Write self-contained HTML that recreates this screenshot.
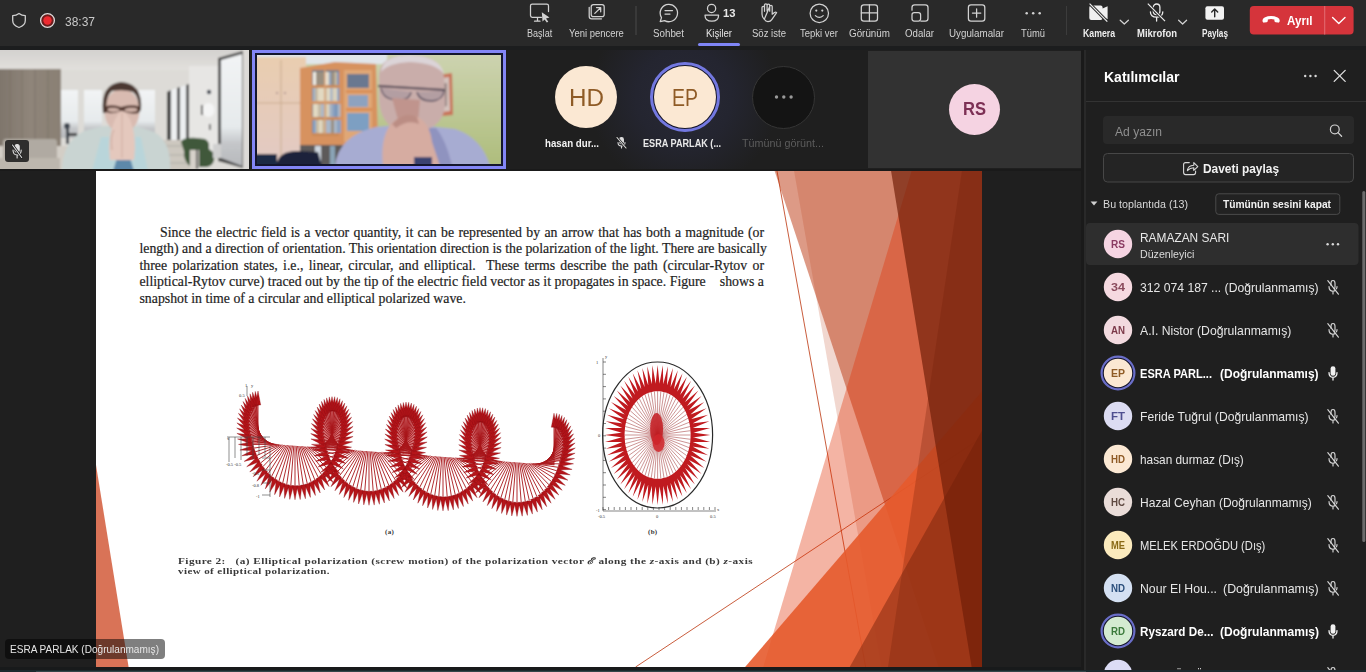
<!DOCTYPE html><html><head><meta charset="utf-8"><style>
*{margin:0;padding:0;box-sizing:border-box}
html,body{width:1366px;height:672px;overflow:hidden;background:#1f1f1f;font-family:"Liberation Sans",sans-serif}
.a{position:absolute}
.tl{position:absolute;font-family:"Liberation Serif",serif;font-size:13.8px;color:#1e1e1e;-webkit-text-stroke:0.2px #1e1e1e;white-space:nowrap;line-height:16px;text-align:justify;text-align-last:justify}
.cap{position:absolute;font-family:"Liberation Serif",serif;font-size:9.6px;font-weight:bold;color:#333;white-space:nowrap;line-height:11px;text-align:justify;text-align-last:justify;letter-spacing:1.0px}
</style></head><body>
<div class="a" style="left:0;top:0;width:1366px;height:46px;background:#292929"></div>
<div class="a" style="left:0;top:46px;width:1366px;height:4px;background:#1c1d1e"></div>
<svg style="position:absolute;left:11px;top:12px" width="16" height="17" viewBox="0 0 16 17"><path d="M8 1.5C10 3 12 3.6 14.3 3.6V8.5C14.3 12 11.8 14.2 8 15.5C4.2 14.2 1.7 12 1.7 8.5V3.6C4 3.6 6 3 8 1.5Z" fill="none" stroke="#cfcfcf" stroke-width="1.3" stroke-linejoin="round"/></svg>
<svg style="position:absolute;left:39px;top:12px" width="17" height="17" viewBox="0 0 17 17"><circle cx="8.5" cy="8.5" r="6.9" fill="#6e1d1d" stroke="#dedede" stroke-width="1.3"/><circle cx="8.5" cy="8.5" r="4.2" fill="#ee2a30"/></svg>
<div style="position:absolute;left:65.0px;top:15.2px;font-family:'Liberation Sans',sans-serif;font-size:13px;line-height:1;font-weight:normal;color:#c9c9c9;white-space:nowrap;transform:scaleX(0.9217);transform-origin:0 0;">38:37</div>
<svg style="position:absolute;left:0;top:0" width="1366" height="47" viewBox="0 0 1366 47"><g fill="none" stroke="#d2d2d2" stroke-width="1.25" stroke-linejoin="round" stroke-linecap="round"><path d="M541.5 17.3H532.2Q530.5 17.3 530.5 15.6V5.8Q530.5 4.2 532.2 4.2H546.8Q548.5 4.2 548.5 5.8V11.5"/><path d="M537.5 17.5V21M534.5 21.2H540"/></g><path d="M541.8 12.2L549.5 17.6L546 18.6L548.3 21.8L546.8 22.6L544.6 19.4L542.5 21.6Z" fill="#d2d2d2"/><g fill="none" stroke="#d2d2d2" stroke-width="1.25" stroke-linejoin="round" stroke-linecap="round"><rect x="591.2" y="4.6" width="13" height="12" rx="2.2"/><path d="M589.2 7.3V16.2Q589.2 18.8 591.8 18.8H601.5"/><path d="M594.8 13.4L600.6 7.7M596.5 7.6H600.7V11.8"/></g><rect x="635.5" y="6" width="1" height="29" fill="#4a4a4a"/><g fill="none" stroke="#d2d2d2" stroke-width="1.25" stroke-linejoin="round" stroke-linecap="round"><path d="M668.6 4.3A8.7 8.7 0 1 1 664.6 20.6L660.2 21.7L661.5 17.6A8.7 8.7 0 0 1 668.6 4.3Z"/><path d="M665 10.6H672.5M665 14.1H670"/></g><g fill="none" stroke="#d2d2d2" stroke-width="1.25" stroke-linejoin="round" stroke-linecap="round"><circle cx="711.6" cy="8.4" r="4.1"/><path d="M705 15.2H718.6Q718.6 21.2 711.8 21.2Q705 21.2 705 15.2Z"/></g><g fill="none" stroke="#d2d2d2" stroke-width="1.25" stroke-linejoin="round" stroke-linecap="round"><path d="M764.3 19.2Q761.8 16.8 762 13.5V7.6Q762 6.3 763.3 6.3Q764.5 6.3 764.5 7.6V11.3M764.5 11.3V5.1Q764.5 3.8 765.8 3.8Q767.1 3.8 767.1 5.1V11M767.1 5.4Q767.1 4.2 768.4 4.2Q769.7 4.2 769.7 5.4V11.2M769.7 6.6Q769.7 5.4 771 5.4Q772.2 5.4 772.2 6.6V14.2L774.5 12.4Q775.7 11.6 776.6 12.6L771.8 19.6Q770.6 21.5 767.9 21.5Q765.7 21.5 764.3 19.2Z"/></g><g fill="none" stroke="#d2d2d2" stroke-width="1.25" stroke-linejoin="round" stroke-linecap="round"><circle cx="819.3" cy="13.3" r="9.2"/><path d="M815.4 15.6Q819.3 19.3 823.2 15.6"/></g><circle cx="816.3" cy="10.6" r="1.1" fill="#d2d2d2"/><circle cx="822.3" cy="10.6" r="1.1" fill="#d2d2d2"/><g fill="none" stroke="#d2d2d2" stroke-width="1.25" stroke-linejoin="round" stroke-linecap="round"><rect x="861.3" y="4.8" width="16.2" height="16.2" rx="2.6"/><path d="M869.4 4.8V21M861.3 12.9H877.5"/></g><g fill="none" stroke="#d2d2d2" stroke-width="1.25" stroke-linejoin="round" stroke-linecap="round"><path d="M912 10.2V7.4Q912 4.8 914.6 4.8H925.3Q928 4.8 928 7.4V18.4Q928 21 925.3 21H920.8"/><rect x="912" y="12.6" width="8.6" height="8.4" rx="2.2"/></g><g fill="none" stroke="#d2d2d2" stroke-width="1.25" stroke-linejoin="round" stroke-linecap="round"><rect x="968.4" y="4.8" width="16.4" height="16.4" rx="2.6"/><path d="M976.6 8.8V17.2M972.4 13H980.8"/></g><circle cx="1026.7" cy="13.2" r="1.25" fill="#d2d2d2"/><circle cx="1033.2" cy="13.2" r="1.25" fill="#d2d2d2"/><circle cx="1039.7" cy="13.2" r="1.25" fill="#d2d2d2"/><rect x="1066" y="6" width="1" height="29" fill="#3c3c3c"/><path d="M1091.3 5.6H1100.6Q1102.6 5.6 1102.6 7.6V8.6L1107.6 6.2V19.2L1102.6 16.8V18Q1102.6 20 1100.6 20H1091.3Q1089.3 20 1089.3 18V7.6Q1089.3 5.6 1091.3 5.6Z" fill="#f0f0f0"/><path d="M1089.6 3.6L1107.3 21.6" stroke="#292929" stroke-width="3"/><path d="M1089.6 3.6L1107.3 21.6" stroke="#f0f0f0" stroke-width="1.2"/><g fill="none" stroke="#d2d2d2" stroke-width="1.25" stroke-linejoin="round" stroke-linecap="round"><path d="M1120.2 20.2L1124.3 24L1128.4 20.2M1178.6 20.2L1182.6 24L1186.6 20.2"/></g><g fill="none" stroke="#ececec" stroke-width="1.3" stroke-linecap="round"><rect x="1153.3" y="4" width="6.6" height="10.6" rx="3.3"/><path d="M1150.4 11.8Q1150.4 17.2 1156.6 17.2Q1162.8 17.2 1162.8 11.8M1156.6 17.2V21"/></g><path d="M1147.8 3.6L1165 21.2" stroke="#292929" stroke-width="3"/><path d="M1147.8 3.6L1165 21.2" stroke="#ececec" stroke-width="1.2"/><rect x="1205.4" y="6.2" width="18.6" height="13.6" rx="2" fill="#f2f2f2"/><path d="M1214.7 16.8V9.2M1211.7 12L1214.7 9L1217.7 12" fill="none" stroke="#292929" stroke-width="1.4" stroke-linecap="round" stroke-linejoin="round"/><rect x="1249.8" y="6" width="103.8" height="28.6" rx="4" fill="#d5343b"/><rect x="1324.3" y="6" width="0.9" height="28.6" fill="#e47479"/><path d="M1262.6 21.6Q1262 18.6 1264.6 17.4Q1271 14.6 1277.6 17.4Q1280.2 18.6 1279.6 21.6Q1279.3 22.8 1278 22.6L1275.6 22.2Q1274.4 22 1274.4 20.8V19.6Q1271 18.6 1267.8 19.6V20.8Q1267.8 22 1266.6 22.2L1264.2 22.6Q1262.9 22.8 1262.6 21.6Z" fill="#fff"/><path d="M1332.6 17.6L1338.8 23.6L1345 17.6" fill="none" stroke="#fff" stroke-width="1.4" stroke-linecap="round" stroke-linejoin="round"/></svg>
<div style="position:absolute;left:723.0px;top:8.1px;font-family:'Liberation Sans',sans-serif;font-size:11px;line-height:1;font-weight:bold;color:#e8e8e8;white-space:nowrap;transform:scaleX(1.0204);transform-origin:0 0;">13</div>
<div style="position:absolute;left:1287.3px;top:15.0px;font-family:'Liberation Sans',sans-serif;font-size:12px;line-height:1;font-weight:bold;color:#ffffff;white-space:nowrap;transform:scaleX(0.9720);transform-origin:0 0;">Ayrıl</div>
<div style="position:absolute;left:526.8px;top:28.7px;font-family:'Liberation Sans',sans-serif;font-size:10px;line-height:1;font-weight:normal;color:#d2d2d2;white-space:nowrap;transform:scaleX(0.9066);transform-origin:0 0;">Başlat</div>
<div style="position:absolute;left:569.0px;top:28.7px;font-family:'Liberation Sans',sans-serif;font-size:10px;line-height:1;font-weight:normal;color:#d2d2d2;white-space:nowrap;transform:scaleX(0.9446);transform-origin:0 0;">Yeni pencere</div>
<div style="position:absolute;left:653.0px;top:28.7px;font-family:'Liberation Sans',sans-serif;font-size:10px;line-height:1;font-weight:normal;color:#d2d2d2;white-space:nowrap;transform:scaleX(0.9778);transform-origin:0 0;">Sohbet</div>
<div style="position:absolute;left:706.0px;top:28.7px;font-family:'Liberation Sans',sans-serif;font-size:10px;line-height:1;font-weight:normal;color:#e6e6e6;white-space:nowrap;transform:scaleX(0.9547);transform-origin:0 0;">Kişiler</div>
<div style="position:absolute;left:752.0px;top:28.7px;font-family:'Liberation Sans',sans-serif;font-size:10px;line-height:1;font-weight:normal;color:#d2d2d2;white-space:nowrap;transform:scaleX(0.9556);transform-origin:0 0;">Söz iste</div>
<div style="position:absolute;left:800.0px;top:28.7px;font-family:'Liberation Sans',sans-serif;font-size:10px;line-height:1;font-weight:normal;color:#d2d2d2;white-space:nowrap;transform:scaleX(0.9496);transform-origin:0 0;">Tepki ver</div>
<div style="position:absolute;left:849.0px;top:28.7px;font-family:'Liberation Sans',sans-serif;font-size:10px;line-height:1;font-weight:normal;color:#d2d2d2;white-space:nowrap;transform:scaleX(0.9835);transform-origin:0 0;">Görünüm</div>
<div style="position:absolute;left:905.0px;top:28.7px;font-family:'Liberation Sans',sans-serif;font-size:10px;line-height:1;font-weight:normal;color:#d2d2d2;white-space:nowrap;transform:scaleX(0.9662);transform-origin:0 0;">Odalar</div>
<div style="position:absolute;left:949.0px;top:28.7px;font-family:'Liberation Sans',sans-serif;font-size:10px;line-height:1;font-weight:normal;color:#d2d2d2;white-space:nowrap;transform:scaleX(0.9797);transform-origin:0 0;">Uygulamalar</div>
<div style="position:absolute;left:1021.0px;top:28.7px;font-family:'Liberation Sans',sans-serif;font-size:10px;line-height:1;font-weight:normal;color:#d2d2d2;white-space:nowrap;transform:scaleX(0.9389);transform-origin:0 0;">Tümü</div>
<div style="position:absolute;left:1083.0px;top:28.7px;font-family:'Liberation Sans',sans-serif;font-size:10px;line-height:1;font-weight:bold;color:#eeeeee;white-space:nowrap;transform:scaleX(0.8719);transform-origin:0 0;">Kamera</div>
<div style="position:absolute;left:1137.0px;top:28.7px;font-family:'Liberation Sans',sans-serif;font-size:10px;line-height:1;font-weight:bold;color:#eeeeee;white-space:nowrap;transform:scaleX(0.9474);transform-origin:0 0;">Mikrofon</div>
<div style="position:absolute;left:1202.0px;top:28.7px;font-family:'Liberation Sans',sans-serif;font-size:10px;line-height:1;font-weight:bold;color:#eeeeee;white-space:nowrap;transform:scaleX(0.8201);transform-origin:0 0;">Paylaş</div>
<div class="a" style="left:698px;top:43px;width:42px;height:3px;border-radius:1.5px;background:#7f85f5"></div>
<svg class="a" style="left:0;top:50px" width="249" height="119" viewBox="0 50 249 119">
<defs><filter id="bl1" x="-5%" y="-5%" width="110%" height="110%"><feGaussianBlur stdDeviation="0.9"/></filter><linearGradient id="ceil" x1="0" y1="0" x2="0" y2="1"><stop offset="0" stop-color="#d2d0ce"/><stop offset="1" stop-color="#e2e0dc"/></linearGradient><linearGradient id="wallp" x1="0" y1="0" x2="1" y2="0"><stop offset="0" stop-color="#7e756b"/><stop offset="0.5" stop-color="#8f857a"/><stop offset="1" stop-color="#8a8074"/></linearGradient><linearGradient id="win" x1="0" y1="0" x2="0" y2="1"><stop offset="0" stop-color="#f2f4f5"/><stop offset="0.65" stop-color="#e6eaec"/><stop offset="0.8" stop-color="#c4c6c9"/><stop offset="1" stop-color="#b7b9bc"/></linearGradient></defs>
<g filter="url(#bl1)">
<rect x="-2" y="48" width="253" height="123" fill="#dddbd7"/>
<rect x="-2" y="48" width="253" height="22" fill="url(#ceil)"/>
<rect x="-2" y="69" width="63" height="77" fill="url(#wallp)"/>
<path d="M10 70V146M22 70V146M35 70V146M48 70V146" stroke="#7a7066" stroke-width="1.5" opacity="0.5"/>
<rect x="61" y="90" width="17" height="48" fill="url(#win)"/>
<rect x="84" y="90" width="18" height="48" fill="url(#win)"/>
<rect x="137" y="90" width="18" height="48" fill="url(#win)"/>
<rect x="66" y="126" width="3" height="18" fill="#39404a"/><circle cx="67" cy="126" r="3" fill="#3c4450"/>
<rect x="69" y="133" width="8" height="3" fill="#444"/>
<path d="M167 92L171 90V141H167Z" fill="#3e3e3e"/><path d="M171 90L177 88V142H171Z" fill="#eef0f1"/><path d="M177 88L180 87V143H177Z" fill="#444"/><path d="M180 87L186 85V144H180Z" fill="#eceef0"/><path d="M186 85L189 84V145H186Z" fill="#464646"/>
<rect x="189" y="66" width="31" height="92" fill="#e7e6e4"/>
<circle cx="209" cy="92" r="2.2" fill="#3b4250"/><ellipse cx="208.5" cy="110" rx="6" ry="7" fill="#f4f4f4"/><rect x="201" y="105" width="1.6" height="10" fill="#333"/><rect x="209" y="124" width="1.6" height="6" fill="#444"/>
<path d="M218 58L243 51V168L218 161Z" fill="#444"/><path d="M221 60L242 54V166L221 158Z" fill="url(#win)"/><rect x="243" y="49" width="8" height="122" fill="#dcdad7"/>
<rect x="-2" y="146" width="170" height="25" fill="#d3cec6"/>
<path d="M155 140H195V171H155Z" fill="#cdc8c0"/><path d="M160 146H190M158 155H192M156 163H194" stroke="#b0aba3" stroke-width="1.2"/>
<rect x="3" y="139" width="54" height="26" rx="3" fill="#b0aaa2"/><rect x="-2" y="158" width="62" height="13" fill="#bdb7ae"/>
<path d="M181 142Q183 137 197 138L205 139Q210 141 209 149L214 153Q216 166 206 167L191 167Q183 161 184 151Z" fill="#41583a"/>
<rect x="190" y="150" width="9" height="19" fill="#d6d1ca"/><rect x="196" y="150" width="2" height="19" fill="#555"/>
<rect x="213" y="144" width="8" height="14" fill="#cfcfcf"/>
<path d="M62 171Q62 142 84 131L104 126L136 126L154 132Q172 142 170 171Z" fill="#c9d4d2"/>
<path d="M92 171L101 137L141 137L148 171Z" fill="#b9d5da"/><path d="M113 171L117 158L130 158L134 171Z" fill="#5d88aa"/>
<ellipse cx="122" cy="111" rx="17.5" ry="22" fill="#d9bbb1"/>
<path d="M103 113Q100 84 121 82Q143 83 141 110L139 112Q139 96 133 92Q124 89 112 91Q106 95 106 113Z" fill="#4b3930"/>
<path d="M105 106.5Q113 104 121 107Q130 104 140 106.5L139 113Q131 115 123 111L120 111Q112 115 106 112Z" fill="#4a3028" opacity="0.9"/><path d="M108 108.5Q113 107 119 109V111Q113 113 108 111Z" fill="#cdb0a6"/><path d="M125 109Q131 107 137 108.5V111Q131 113 125 111Z" fill="#cdb0a6"/>
<path d="M110 160Q107 138 114 122Q118 112 122 112Q127 112 131 122Q137 138 134 160Z" fill="#e4c8bd"/>
<path d="M122 113V158" stroke="#cfada2" stroke-width="1"/><path d="M114 130Q110 136 112 150" stroke="#c9a89d" stroke-width="1" fill="none"/>
</g></svg>
<div class="a" style="left:5px;top:140px;width:24px;height:22px;border-radius:3px;background:rgba(28,28,28,0.88)"></div>
<svg class="a" style="left:5px;top:140px" width="24" height="22" viewBox="0 0 24 22"><g fill="none" stroke="#e0e0e0" stroke-width="1.1" stroke-linecap="round"><rect x="10" y="4.5" width="4.2" height="7.5" rx="2.1" fill="#e0e0e0"/><path d="M8 10Q8 15 12.1 15Q16.2 15 16.2 10M12.1 15V18"/><path d="M7.5 5L16.7 17.5" stroke="#1e1e1e" stroke-width="2.6"/><path d="M7.5 5L16.7 17.5"/></g></svg>
<div class="a" style="left:252px;top:50px;width:254px;height:119px;border:3px solid #8386f6;background:#14162e"></div>
<svg class="a" style="left:257px;top:55px" width="244" height="109" viewBox="257 55 244 109">
<defs><filter id="bl2" x="-5%" y="-5%" width="110%" height="110%"><feGaussianBlur stdDeviation="1.0"/></filter><linearGradient id="gw" x1="0" y1="0" x2="0" y2="1"><stop offset="0" stop-color="#cdd3b0"/><stop offset="1" stop-color="#aebd7c"/></linearGradient><linearGradient id="cab" x1="0" y1="0" x2="0" y2="1"><stop offset="0" stop-color="#e9cdb0"/><stop offset="1" stop-color="#e2cac4"/></linearGradient></defs>
<g filter="url(#bl2)">
<rect x="255" y="53" width="248" height="113" fill="url(#gw)"/>
<rect x="255" y="53" width="132" height="11" fill="#e1e6ea"/>
<rect x="255" y="57" width="51" height="109" fill="url(#cab)"/>
<path d="M281 60V164M255 103H306" stroke="#c9ab8e" stroke-width="1"/><circle cx="277" cy="93" r="1" fill="#a88"/><circle cx="285" cy="93" r="1" fill="#a88"/>
<path d="M300 68L335 62L376 64L378 143L345 146L300 150Z" fill="#d7925e"/>
<rect x="312" y="70" width="27" height="64" fill="#7d7f86"/>
<rect x="313.0" y="72" width="3" height="13" fill="#f0ece4"/>
<rect x="316.0" y="72" width="3" height="13" fill="#9a8f80"/>
<rect x="319.0" y="72" width="2" height="13" fill="#9a8f80"/>
<rect x="321.0" y="72" width="3.5" height="13" fill="#9a8f80"/>
<rect x="324.5" y="72" width="2.5" height="13" fill="#f0ece4"/>
<rect x="327.0" y="72" width="2" height="13" fill="#e2d9c2"/>
<rect x="329.0" y="72" width="2" height="13" fill="#8aa3c4"/>
<rect x="331.0" y="72" width="3.5" height="13" fill="#9a8f80"/>
<rect x="334.5" y="72" width="2.5" height="13" fill="#c9bca2"/>
<rect x="337.0" y="72" width="2" height="13" fill="#6f93bd"/>
<rect x="312" y="85" width="27" height="3" fill="#c98a58"/>
<rect x="313.0" y="88" width="2.5" height="13" fill="#a9b7c9"/>
<rect x="315.5" y="88" width="2.5" height="13" fill="#c9bca2"/>
<rect x="318.0" y="88" width="3" height="13" fill="#e2d9c2"/>
<rect x="321.0" y="88" width="3.5" height="13" fill="#e2d9c2"/>
<rect x="324.5" y="88" width="2" height="13" fill="#e2d9c2"/>
<rect x="326.5" y="88" width="3.5" height="13" fill="#e2d9c2"/>
<rect x="330.0" y="88" width="2.5" height="13" fill="#a9b7c9"/>
<rect x="332.5" y="88" width="2" height="13" fill="#e2d9c2"/>
<rect x="334.5" y="88" width="2.5" height="13" fill="#e2d9c2"/>
<rect x="337.0" y="88" width="2.5" height="13" fill="#8aa3c4"/>
<rect x="312" y="101" width="27" height="3" fill="#c98a58"/>
<rect x="313.0" y="104" width="3" height="13" fill="#e2d9c2"/>
<rect x="316.0" y="104" width="2.5" height="13" fill="#e2d9c2"/>
<rect x="318.5" y="104" width="2.5" height="13" fill="#c9bca2"/>
<rect x="321.0" y="104" width="3" height="13" fill="#a9b7c9"/>
<rect x="324.0" y="104" width="3" height="13" fill="#c9bca2"/>
<rect x="327.0" y="104" width="2.5" height="13" fill="#e2d9c2"/>
<rect x="329.5" y="104" width="3" height="13" fill="#a9b7c9"/>
<rect x="332.5" y="104" width="3" height="13" fill="#8aa3c4"/>
<rect x="335.5" y="104" width="2" height="13" fill="#6f93bd"/>
<rect x="337.5" y="104" width="3" height="13" fill="#a9b7c9"/>
<rect x="312" y="117" width="27" height="3" fill="#c98a58"/>
<rect x="313.0" y="120" width="3" height="13" fill="#8aa3c4"/>
<rect x="316.0" y="120" width="3" height="13" fill="#c9bca2"/>
<rect x="319.0" y="120" width="3" height="13" fill="#e2d9c2"/>
<rect x="322.0" y="120" width="3.5" height="13" fill="#c9bca2"/>
<rect x="325.5" y="120" width="2.5" height="13" fill="#a9b7c9"/>
<rect x="328.0" y="120" width="3" height="13" fill="#a9b7c9"/>
<rect x="331.0" y="120" width="3" height="13" fill="#9a8f80"/>
<rect x="334.0" y="120" width="3.5" height="13" fill="#a9b7c9"/>
<rect x="337.5" y="120" width="3.5" height="13" fill="#8aa3c4"/>
<rect x="312" y="133" width="27" height="3" fill="#c98a58"/>
<path d="M325 70V134M312 102H339" stroke="#d9a070" stroke-width="1.5"/>
<rect x="344" y="70" width="28" height="72" fill="#e0a776"/>
<rect x="347" y="74" width="22" height="14" fill="#6b7890"/><rect x="346" y="90" width="26" height="3" fill="#d98e58"/><rect x="348" y="95" width="20" height="12" fill="#8ea2bf"/><rect x="346" y="108" width="26" height="3" fill="#d98e58"/><rect x="347" y="113" width="22" height="18" fill="#7d9fc2"/>
<rect x="300" y="145" width="75" height="21" fill="#5d5a5a"/><rect x="315" y="146" width="6" height="20" fill="#cfd7e0"/><rect x="330" y="146" width="5" height="20" fill="#8aa4b6"/>
<path d="M276 166Q278 150 300 151L318 152L322 166Z" fill="#1a233a"/><rect x="255" y="154" width="22" height="12" fill="#1e2a44"/>
<path d="M432 76L452 73L453 115L432 117Z" fill="#c8755a"/><path d="M435 79L449 77L450 111L435 113Z" fill="#d4c3bd"/><path d="M439 84L447 83L447 106L439 108Z" fill="#9c8a88"/>
<path d="M335 166Q338 136 376 127L410 124L455 129Q482 138 490 166Z" fill="#a7acd2"/>
<path d="M420 128L438 166H452Q446 140 436 128Z" fill="#8f93bf"/>
<path d="M379 75Q380 55 410 55Q441 55 444 77L445 100Q446 122 428 129L400 131Q382 126 379 102Z" fill="#c9adaa"/>
<path d="M381 72Q383 55 410 55Q440 56 444 74Q436 63 410 62Q388 63 381 72Z" fill="#dcd4d8"/>
<path d="M378 86L445 90" stroke="#4a4050" stroke-width="2.2"/><path d="M381 88Q383 100 398 100Q410 100 411 92M417 92Q419 101 432 101Q443 100 444 91" fill="#9a8c98" fill-opacity="0.45" stroke="#5a5060" stroke-width="1.3"/>
<path d="M392 98L420 100L418 122L398 120Z" fill="#c0948d"/>
<path d="M383 166Q380 140 390 125Q400 113 418 117Q430 124 432 142L440 166Z" fill="#d6aca1"/>
<path d="M392 124Q404 111 417 117L419 124Q408 119 396 128Z" fill="#bb8d84"/>
<rect x="414" y="157" width="18" height="9" fill="#3a4270"/>
</g></svg>
<div class="a" style="left:506px;top:50px;width:362px;height:119px;background:radial-gradient(ellipse 95px 95px at 178px 47px,#282936 0%,#242530 50%,#1f1f1f 100%)"></div>
<div class="a" style="left:555px;top:66px;width:62px;height:62px;border-radius:50%;background:#fbe8d3"></div>
<div style="position:absolute;left:568.5px;top:86.7px;font-family:'Liberation Sans',sans-serif;font-size:23px;line-height:1;font-weight:normal;color:#8f5b26;white-space:nowrap;transform:scaleX(1.0531);transform-origin:0 0;">HD</div>
<div class="a" style="left:649.5px;top:62px;width:70px;height:70px;border-radius:50%;border:3px solid #7378e0;background:#16172a"></div>
<div class="a" style="left:653.5px;top:66px;width:62px;height:62px;border-radius:50%;background:#fbe8d3"></div>
<div style="position:absolute;left:671.8px;top:86.7px;font-family:'Liberation Sans',sans-serif;font-size:23px;line-height:1;font-weight:normal;color:#8f5b26;white-space:nowrap;transform:scaleX(0.8473);transform-origin:0 0;">EP</div>
<div class="a" style="left:752px;top:65.5px;width:63px;height:63px;border-radius:50%;background:#141414;border:1.5px solid #353535"></div>
<svg class="a" style="left:770px;top:93px" width="28" height="8"><circle cx="6.5" cy="4" r="1.7" fill="#9a9a9a"/><circle cx="13.8" cy="4" r="1.7" fill="#9a9a9a"/><circle cx="21.1" cy="4" r="1.7" fill="#9a9a9a"/></svg>
<div style="position:absolute;left:545.0px;top:137.8px;font-family:'Liberation Sans',sans-serif;font-size:10.5px;line-height:1;font-weight:bold;color:#f2f2f2;white-space:nowrap;transform:scaleX(0.9253);transform-origin:0 0;">hasan dur...</div>
<svg class="a" style="left:615px;top:136px" width="13" height="13" viewBox="0 0 13 13"><g fill="none" stroke="#dcdcdc" stroke-width="1.1" stroke-linecap="round"><rect x="4.6" y="1.5" width="3.8" height="6.4" rx="1.9" fill="#dcdcdc"/><path d="M3 6.5Q3 10 6.5 10Q10 10 10 6.5M6.5 10V12"/><path d="M2 1.5L11 12" stroke="#1f1f1f" stroke-width="2.4"/><path d="M2 1.5L11 12"/></g></svg>
<div style="position:absolute;left:643.0px;top:137.8px;font-family:'Liberation Sans',sans-serif;font-size:10.5px;line-height:1;font-weight:bold;color:#e8e8e8;white-space:nowrap;transform:scaleX(0.8682);transform-origin:0 0;">ESRA PARLAK (...</div>
<div style="position:absolute;left:742.0px;top:137.8px;font-family:'Liberation Sans',sans-serif;font-size:10.5px;line-height:1;font-weight:normal;color:#5c5c5c;white-space:nowrap;transform:scaleX(1.0254);transform-origin:0 0;">Tümünü görünt...</div>
<div class="a" style="left:868px;top:51px;width:213px;height:117px;background:#323232"></div>
<div class="a" style="left:948.5px;top:83.5px;width:51px;height:51px;border-radius:50%;background:#f5d3e2"></div>
<div style="position:absolute;left:963.0px;top:101.3px;font-family:'Liberation Sans',sans-serif;font-size:17.5px;line-height:1;font-weight:bold;color:#7d3055;white-space:nowrap;transform:scaleX(0.9460);transform-origin:0 0;">RS</div>
<div class="a" style="left:0;top:169px;width:1081px;height:2px;background:#1a1a1a"></div>
<svg class="a" style="left:96px;top:171px" width="886" height="496" viewBox="0 0 886 496"><rect width="886" height="496" fill="#fff"/><line x1="681.0" y1="0" x2="769.6" y2="496" stroke="#bb350d" stroke-opacity="0.8" stroke-width="1"/>
<line x1="539.6" y1="496" x2="886" y2="266.3" stroke="#bb350d" stroke-opacity="0.8" stroke-width="1"/>
<polygon points="678.3,-1.0 886.0,-1.0 886.0,496.0 842.6,496.0" fill="#bb350d" fill-opacity="0.5" />
<polygon points="697.9,-1.0 886.0,-1.0 886.0,496.0 785.3,496.0" fill="#bb350d" fill-opacity="0.2" />
<polygon points="815.9,-1.0 886.0,-1.0 886.0,496.0 667.2,496.0" fill="#e03004" fill-opacity="0.36" />
<polygon points="649.1,496.0 886.0,496.0 886.0,220.4" fill="#e55a2c" fill-opacity="0.9" />
<polygon points="794.9,-1.0 886.0,-1.0 886.0,496.0 875.6,496.0" fill="#6e1e08" fill-opacity="0.68" />
<polygon points="866.1,-1.0 886.0,-1.0 886.0,496.0 792.0,496.0" fill="#6e1e08" fill-opacity="0.28" />
<polygon points="753.7,496.0 886.0,496.0 886.0,259.6" fill="#6e1e08" fill-opacity="0.45" />
<polygon points="0.0,294.0 0.0,496.0 32.6,496.0" fill="#d25a3a" fill-opacity="0.85" /></svg>
<div class="tl" style="left:160px;top:225.0px;width:604px">Since the electric field is a vector quantity, it can be represented by an arrow that has both a magnitude (or</div>
<div class="tl" style="left:139.5px;top:241.4px;width:624.5px">length) and a direction of orientation. This orientation direction is the polarization of the light. There are basically</div>
<div class="tl" style="left:139.5px;top:257.9px;width:624.5px">three polarization states, i.e., linear, circular, and elliptical.&nbsp; These terms describe the path (circular-Rytov or</div>
<div class="tl" style="left:139.5px;top:274.2px;width:624.5px">elliptical-Rytov curve) traced out by the tip of the electric field vector as it propagates in space. Figure &nbsp;&nbsp; shows a</div>
<div class="tl" style="left:139.5px;top:290.6px;text-align:left;text-align-last:left">snapshot in time of a circular and elliptical polarized wave.</div>
<div style="position:absolute;left:178.0px;top:556.6px;font-family:'Liberation Serif',serif;font-size:9.2px;line-height:1;font-weight:bold;color:#3a3a3a;white-space:nowrap;transform:scaleX(1.2270);transform-origin:0 0;letter-spacing:0.35px;filter:blur(0.25px);">Figure 2: &nbsp;&nbsp;(a) Elliptical polarization (screw motion) of the polarization vector <i>ℰ</i> along the <i>z</i>-axis and (b) <i>z</i>-axis</div>
<div style="position:absolute;left:178.0px;top:567.3px;font-family:'Liberation Serif',serif;font-size:9.2px;line-height:1;font-weight:bold;color:#3a3a3a;white-space:nowrap;transform:scaleX(1.1963);transform-origin:0 0;letter-spacing:0.35px;filter:blur(0.25px);">view of elliptical polarization.</div>
<div class="cap" style="left:385px;top:526.5px;font-size:7px;letter-spacing:0.3px;text-align:left;text-align-last:left">(a)</div>
<div class="cap" style="left:648px;top:526.5px;font-size:7px;letter-spacing:0.3px;text-align:left;text-align-last:left">(b)</div>
<svg class="a" style="left:0;top:0" width="1366" height="672" viewBox="0 0 1366 672"><path d="M258.0 401.4L256.1 401.7L254.1 402.5L252.3 403.7L250.6 405.4L249.0 407.4L247.5 409.9L246.3 412.7L245.3 415.9L244.5 419.4L244.0 423.1L243.8 427.1L243.9 431.3L244.3 435.6L245.0 439.9L246.1 444.4L276.5 444.4L258.0 443.0ZM345.0 442.9L345.7 438.7L346.1 434.6L346.2 430.6L346.0 426.8L345.5 423.3L344.7 420.0L343.7 417.0L342.5 414.3L341.0 412.1L339.4 410.2L337.7 408.7L335.9 407.7L333.9 407.1L332.0 406.9L330.1 407.3L328.1 408.0L326.3 409.3L324.6 410.9L323.0 413.0L321.5 415.4L320.3 418.3L319.3 421.5L318.5 424.9L318.0 428.7L317.8 432.6L317.9 436.8L318.3 441.1L319.0 445.5L320.1 449.9L350.5 449.9L314.7 447.3ZM419.0 448.5L419.7 444.2L420.1 440.1L420.2 436.2L420.0 432.4L419.5 428.8L418.7 425.5L417.7 422.5L416.5 419.9L415.0 417.6L413.4 415.7L411.7 414.3L409.9 413.2L407.9 412.6L406.0 412.5L404.1 412.8L402.1 413.6L400.3 414.8L398.6 416.5L397.0 418.5L395.5 421.0L394.3 423.8L393.3 427.0L392.5 430.5L392.0 434.2L391.8 438.2L391.9 442.4L392.3 446.7L393.0 451.0L394.1 455.5L424.5 455.5L388.7 452.8ZM493.0 454.0L493.7 449.8L494.1 445.7L494.2 441.7L494.0 437.9L493.5 434.4L492.7 431.1L491.7 428.1L490.5 425.4L489.0 423.2L487.4 421.3L485.7 419.8L483.9 418.8L481.9 418.2L480.0 418.0L478.1 418.4L476.1 419.1L474.3 420.4L472.6 422.0L471.0 424.1L469.5 426.5L468.3 429.4L467.3 432.6L466.5 436.0L466.0 439.8L465.8 443.7L465.9 447.9L466.3 452.2L467.0 456.6L468.1 461.0L498.5 461.0L462.7 458.4ZM567.0 459.6L567.7 455.3L568.1 451.2L568.2 447.3L568.0 443.5L567.5 439.9L566.7 436.6L565.7 433.6L564.5 431.0L563.0 428.7L561.4 426.8L559.7 425.4L557.9 424.3L555.9 423.7L554.0 423.6L554.0 465.2L536.7 463.9Z" fill="#b8161b" fill-opacity="0.6"/>
<path d="M258.0 443.0L258.0 405.0M259.2 443.1L256.3 405.3M260.5 443.2L254.7 406.2M261.7 443.3L253.2 407.4M262.9 443.4L251.8 409.2M264.2 443.5L250.6 411.3M265.4 443.6L249.6 413.9M266.6 443.6L248.9 416.7M267.9 443.7L248.4 419.8M269.1 443.8L248.3 423.1M270.3 443.9L248.4 426.6M271.6 444.0L248.8 430.2M272.8 444.1L249.5 433.7M274.0 444.2L250.3 437.3M275.3 444.3L251.3 440.9M276.5 444.4L252.5 444.4M277.7 444.5L253.8 448.1M279.0 444.6L255.2 451.8M280.2 444.7L256.8 455.5M281.4 444.8L258.5 459.2M282.7 444.9L260.6 463.0M283.9 444.9L262.9 466.6M285.1 445.0L265.5 470.1M286.4 445.1L268.4 473.4M287.6 445.2L271.6 476.4M288.8 445.3L275.1 479.1M290.1 445.4L278.8 481.4M291.3 445.5L282.7 483.2M292.5 445.6L286.7 484.6M293.8 445.7L290.8 485.4M295.0 445.8L295.0 485.8M296.2 445.9L299.2 485.6M297.5 446.0L303.3 484.9M298.7 446.1L307.3 483.8M299.9 446.1L311.2 482.1M301.2 446.2L314.9 480.0M302.4 446.3L318.4 477.6M303.6 446.4L321.6 474.7M304.9 446.5L324.5 471.6M306.1 446.6L327.1 468.3M307.3 446.7L329.4 464.8M308.6 446.8L331.5 461.3M309.8 446.9L333.2 457.7M311.0 447.0L334.8 454.2M312.3 447.1L336.2 450.6M313.5 447.2L337.5 447.2M314.7 447.3L338.7 443.8M316.0 447.3L339.7 440.4M317.2 447.4L340.5 437.1M318.4 447.5L341.2 433.7M319.7 447.6L341.6 430.3M320.9 447.7L341.7 427.0M322.1 447.8L341.6 423.9M323.4 447.9L341.1 421.0M324.6 448.0L340.4 418.3M325.8 448.1L339.4 416.0M327.1 448.2L338.2 414.0M328.3 448.3L336.8 412.4M329.5 448.4L335.3 411.3M330.8 448.5L333.7 410.7M332.0 448.6L332.0 410.6M333.2 448.6L330.3 410.9M334.5 448.7L328.7 411.7M335.7 448.8L327.2 413.0M336.9 448.9L325.8 414.7M338.2 449.0L324.6 416.9M339.4 449.1L323.6 419.4M340.6 449.2L322.9 422.2M341.9 449.3L322.4 425.4M343.1 449.4L322.3 428.7M344.3 449.5L322.4 432.2M345.6 449.6L322.8 435.7M346.8 449.7L323.5 439.3M348.0 449.8L324.3 442.9M349.3 449.8L325.3 446.4M350.5 449.9L326.5 449.9M351.7 450.0L327.8 453.6M353.0 450.1L329.2 457.3M354.2 450.2L330.8 461.0M355.4 450.3L332.5 464.8M356.7 450.4L334.6 468.5M357.9 450.5L336.9 472.2M359.1 450.6L339.5 475.7M360.4 450.7L342.4 479.0M361.6 450.8L345.6 482.0M362.8 450.9L349.1 484.7M364.1 451.0L352.8 486.9M365.3 451.0L356.7 488.8M366.5 451.1L360.7 490.1M367.8 451.2L364.8 491.0M369.0 451.3L369.0 491.3M370.2 451.4L373.2 491.2M371.5 451.5L377.3 490.5M372.7 451.6L381.3 489.3M373.9 451.7L385.2 487.7M375.2 451.8L388.9 485.6M376.4 451.9L392.4 483.1M377.6 452.0L395.6 480.3M378.9 452.1L398.5 477.2M380.1 452.2L401.1 473.8M381.3 452.2L403.4 470.4M382.6 452.3L405.5 466.8M383.8 452.4L407.2 463.3M385.0 452.5L408.8 459.7M386.3 452.6L410.2 456.2M387.5 452.7L411.5 452.7M388.7 452.8L412.7 449.4M390.0 452.9L413.7 446.0M391.2 453.0L414.5 442.6M392.4 453.1L415.2 439.2M393.7 453.2L415.6 435.9M394.9 453.3L415.7 432.6M396.1 453.4L415.6 429.4M397.4 453.5L415.1 426.5M398.6 453.5L414.4 423.8M399.8 453.6L413.4 421.5M401.1 453.7L412.2 419.5M402.3 453.8L410.8 418.0M403.5 453.9L409.3 416.9M404.8 454.0L407.7 416.3M406.0 454.1L406.0 416.1M407.2 454.2L404.3 416.4M408.5 454.3L402.7 417.3M409.7 454.4L401.2 418.5M410.9 454.5L399.8 420.3M412.2 454.6L398.6 422.4M413.4 454.7L397.6 425.0M414.6 454.7L396.9 427.8M415.9 454.8L396.4 430.9M417.1 454.9L396.3 434.2M418.3 455.0L396.4 437.7M419.6 455.1L396.8 441.3M420.8 455.2L397.5 444.8M422.0 455.3L398.3 448.4M423.3 455.4L399.3 452.0M424.5 455.5L400.5 455.5M425.7 455.6L401.8 459.2M427.0 455.7L403.2 462.9M428.2 455.8L404.8 466.6M429.4 455.9L406.5 470.3M430.7 455.9L408.6 474.1M431.9 456.0L410.9 477.7M433.1 456.1L413.5 481.2M434.4 456.2L416.4 484.5M435.6 456.3L419.6 487.5M436.8 456.4L423.1 490.2M438.1 456.5L426.8 492.5M439.3 456.6L430.7 494.3M440.5 456.7L434.7 495.7M441.8 456.8L438.8 496.5M443.0 456.9L443.0 496.9M444.2 457.0L447.2 496.7M445.5 457.1L451.3 496.0M446.7 457.2L455.3 494.9M447.9 457.2L459.2 493.2M449.2 457.3L462.9 491.1M450.4 457.4L466.4 488.7M451.6 457.5L469.6 485.8M452.9 457.6L472.5 482.7M454.1 457.7L475.1 479.4M455.3 457.8L477.4 475.9M456.6 457.9L479.5 472.4M457.8 458.0L481.2 468.8M459.0 458.1L482.8 465.3M460.3 458.2L484.2 461.7M461.5 458.3L485.5 458.3M462.7 458.4L486.7 454.9M464.0 458.4L487.7 451.5M465.2 458.5L488.5 448.2M466.4 458.6L489.2 444.8M467.7 458.7L489.6 441.4M468.9 458.8L489.7 438.1M470.1 458.9L489.6 435.0M471.4 459.0L489.1 432.1M472.6 459.1L488.4 429.4M473.8 459.2L487.4 427.1M475.1 459.3L486.2 425.1M476.3 459.4L484.8 423.5M477.5 459.5L483.3 422.4M478.8 459.6L481.7 421.8M480.0 459.6L480.0 421.6M481.2 459.7L478.3 422.0M482.5 459.8L476.7 422.8M483.7 459.9L475.2 424.1M484.9 460.0L473.8 425.8M486.2 460.1L472.6 428.0M487.4 460.2L471.6 430.5M488.6 460.3L470.9 433.3M489.9 460.4L470.4 436.5M491.1 460.5L470.3 439.8M492.3 460.6L470.4 443.3M493.6 460.7L470.8 446.8M494.8 460.8L471.5 450.4M496.0 460.9L472.3 454.0M497.3 460.9L473.3 457.5M498.5 461.0L474.5 461.0M499.7 461.1L475.8 464.7M501.0 461.2L477.2 468.4M502.2 461.3L478.8 472.1M503.4 461.4L480.5 475.9M504.7 461.5L482.6 479.6M505.9 461.6L484.9 483.3M507.1 461.7L487.5 486.8M508.4 461.8L490.4 490.1M509.6 461.9L493.6 493.1M510.8 462.0L497.1 495.8M512.1 462.1L500.8 498.0M513.3 462.1L504.7 499.9M514.5 462.2L508.7 501.2M515.8 462.3L512.8 502.1M517.0 462.4L517.0 502.4M518.2 462.5L521.2 502.3M519.5 462.6L525.3 501.6M520.7 462.7L529.3 500.4M521.9 462.8L533.2 498.8M523.2 462.9L536.9 496.7M524.4 463.0L540.4 494.2M525.6 463.1L543.6 491.4M526.9 463.2L546.5 488.3M528.1 463.3L549.1 484.9M529.3 463.4L551.4 481.5M530.6 463.4L553.5 477.9M531.8 463.5L555.2 474.4M533.0 463.6L556.8 470.8M534.3 463.7L558.2 467.3M535.5 463.8L559.5 463.8M536.7 463.9L560.7 460.5M538.0 464.0L561.7 457.1M539.2 464.1L562.5 453.7M540.4 464.2L563.2 450.3M541.7 464.3L563.6 447.0M542.9 464.4L563.7 443.7M544.1 464.5L563.6 440.5M545.4 464.6L563.1 437.6M546.6 464.6L562.4 434.9M547.8 464.7L561.4 432.6M549.1 464.8L560.2 430.6M550.3 464.9L558.8 429.1M551.5 465.0L557.3 428.0M552.8 465.1L555.7 427.4M554.0 465.2L554.0 427.2" stroke="#a8151a" stroke-width="0.9" fill="none"/>
<path d="M258.0 391.0L260.7 405.0L255.3 405.0ZM255.3 391.4L259.0 405.1L253.6 405.5ZM252.6 392.3L257.4 405.7L252.0 406.6ZM250.0 393.8L255.8 406.8L250.6 408.1ZM247.5 395.9L254.4 408.3L249.2 410.0ZM245.2 398.4L253.1 410.3L248.1 412.4ZM243.1 401.5L252.0 412.6L247.2 415.1ZM241.2 405.0L251.2 415.2L246.6 418.2ZM239.6 408.9L250.5 418.1L246.4 421.5ZM238.4 413.3L250.2 421.2L246.4 425.1ZM237.4 417.9L250.1 424.5L246.7 428.7ZM236.9 422.9L250.2 427.8L247.4 432.5ZM236.7 428.0L250.5 431.3L248.4 436.2ZM236.9 433.4L251.1 434.7L249.6 439.9ZM237.5 438.9L251.7 438.2L250.9 443.5ZM238.5 444.4L252.5 441.7L252.5 447.1ZM239.9 450.1L253.4 445.4L254.2 450.7ZM241.8 455.8L254.4 449.2L256.0 454.3ZM244.1 461.4L255.6 453.0L257.9 457.9ZM246.7 466.7L257.1 457.0L260.0 461.5ZM249.8 471.9L258.9 460.9L262.3 465.1ZM253.2 476.7L261.0 464.7L264.8 468.5ZM256.9 481.2L263.4 468.5L267.6 471.8ZM260.9 485.3L266.2 472.0L270.7 474.9ZM265.3 488.9L269.2 475.2L274.0 477.7ZM269.8 492.1L272.6 478.1L277.6 480.1ZM274.6 494.7L276.2 480.6L281.4 482.2ZM279.6 496.9L280.0 482.6L285.3 483.8ZM284.6 498.4L284.0 484.2L289.4 485.0ZM289.8 499.4L288.1 485.2L293.5 485.6ZM295.0 499.8L292.3 485.8L297.7 485.8ZM300.2 499.6L296.5 485.8L301.9 485.4ZM305.4 498.8L300.6 485.3L306.0 484.5ZM310.4 497.4L304.7 484.4L310.0 483.2ZM315.4 495.5L308.6 482.9L313.8 481.3ZM320.2 493.0L312.4 481.0L317.4 479.0ZM324.7 490.0L316.0 478.8L320.8 476.3ZM329.1 486.6L319.3 476.2L323.8 473.3ZM333.1 482.6L322.4 473.3L326.6 470.0ZM336.8 478.3L325.2 470.2L329.0 466.4ZM340.2 473.7L327.7 466.9L331.1 462.7ZM343.3 468.8L330.0 463.6L332.9 459.0ZM345.9 463.6L332.1 460.2L334.4 455.3ZM348.2 458.2L334.0 456.7L335.6 451.6ZM350.1 452.7L335.8 453.3L336.6 448.0ZM351.5 447.2L337.5 449.9L337.5 444.5ZM352.5 441.8L339.1 446.5L338.3 441.1ZM353.1 436.5L340.4 443.0L338.9 437.9ZM353.3 431.4L341.6 439.5L339.5 434.6ZM353.1 426.4L342.6 436.0L339.8 431.4ZM352.6 421.6L343.3 432.4L339.9 428.2ZM351.6 417.2L343.6 428.9L339.8 425.1ZM350.4 413.0L343.6 425.6L339.5 422.2ZM348.8 409.3L343.4 422.4L338.8 419.5ZM346.9 405.9L342.8 419.6L338.0 417.0ZM344.8 403.1L341.9 417.0L336.9 414.9ZM342.5 400.7L340.8 414.8L335.6 413.2ZM340.0 398.8L339.4 413.1L334.2 411.8ZM337.4 397.5L338.0 411.7L332.6 410.9ZM334.7 396.7L336.4 410.9L331.0 410.5ZM332.0 396.6L334.7 410.6L329.3 410.6ZM329.3 396.9L333.0 410.7L327.6 411.1ZM326.6 397.9L331.4 411.3L326.0 412.1ZM324.0 399.4L329.8 412.4L324.6 413.6ZM321.5 401.4L328.4 413.9L323.2 415.6ZM319.2 404.0L327.1 415.8L322.1 417.9ZM317.1 407.0L326.0 418.1L321.2 420.7ZM315.2 410.6L325.2 420.8L320.6 423.7ZM313.6 414.5L324.5 423.7L320.4 427.1ZM312.4 418.8L324.2 426.8L320.4 430.6ZM311.4 423.5L324.1 430.0L320.7 434.3ZM310.9 428.4L324.2 433.4L321.4 438.0ZM310.7 433.6L324.5 436.8L322.4 441.7ZM310.9 438.9L325.1 440.3L323.6 445.4ZM311.5 444.4L325.7 443.7L324.9 449.1ZM312.5 449.9L326.5 447.2L326.5 452.6ZM313.9 455.7L327.4 450.9L328.2 456.3ZM315.8 461.3L328.4 454.7L330.0 459.9ZM318.1 466.9L329.6 458.6L331.9 463.5ZM320.7 472.3L331.1 462.5L334.0 467.1ZM323.8 477.4L332.9 466.4L336.3 470.6ZM327.2 482.2L335.0 470.3L338.8 474.1ZM330.9 486.7L337.4 474.0L341.6 477.3ZM334.9 490.8L340.2 477.5L344.7 480.4ZM339.3 494.5L343.2 480.8L348.0 483.2ZM343.8 497.6L346.6 483.6L351.6 485.7ZM348.6 500.3L350.2 486.1L355.4 487.7ZM353.6 502.4L354.0 488.2L359.3 489.4ZM358.6 504.0L358.0 489.7L363.4 490.5ZM363.8 504.9L362.1 490.8L367.5 491.2ZM369.0 505.3L366.3 491.3L371.7 491.3ZM374.2 505.1L370.5 491.4L375.9 491.0ZM379.4 504.3L374.6 490.9L380.0 490.1ZM384.4 503.0L378.7 489.9L384.0 488.7ZM389.4 501.0L382.6 488.5L387.8 486.9ZM394.2 498.6L386.4 486.6L391.4 484.6ZM398.7 495.6L390.0 484.3L394.8 481.9ZM403.1 492.1L393.3 481.7L397.8 478.8ZM407.1 488.2L396.4 478.8L400.6 475.5ZM410.8 483.9L399.2 475.7L403.0 472.0ZM414.2 479.2L401.7 472.5L405.1 468.3ZM417.3 474.3L404.0 469.1L406.9 464.5ZM419.9 469.1L406.1 465.7L408.4 460.8ZM422.2 463.8L408.0 462.3L409.6 457.1ZM424.1 458.3L409.8 458.9L410.6 453.5ZM425.5 452.7L411.5 455.4L411.5 450.0ZM426.5 447.4L413.1 452.0L412.3 446.7ZM427.1 442.1L414.4 448.6L412.9 443.4ZM427.3 436.9L415.6 445.1L413.5 440.1ZM427.1 431.9L416.6 441.5L413.8 436.9ZM426.6 427.2L417.3 438.0L413.9 433.7ZM425.6 422.7L417.6 434.5L413.8 430.7ZM424.4 418.6L417.6 431.1L413.5 427.7ZM422.8 414.8L417.4 428.0L412.8 425.0ZM420.9 411.5L416.8 425.1L412.0 422.6ZM418.8 408.6L415.9 422.6L410.9 420.5ZM416.5 406.2L414.8 420.4L409.6 418.7ZM414.0 404.4L413.4 418.6L408.2 417.4ZM411.4 403.1L412.0 417.3L406.6 416.5ZM408.7 402.3L410.4 416.5L405.0 416.0ZM406.0 402.1L408.7 416.1L403.3 416.1ZM403.3 402.5L407.0 416.2L401.6 416.6ZM400.6 403.4L405.4 416.8L400.0 417.7ZM398.0 404.9L403.8 417.9L398.6 419.2ZM395.5 407.0L402.4 419.4L397.2 421.1ZM393.2 409.5L401.1 421.4L396.1 423.5ZM391.1 412.6L400.0 423.7L395.2 426.2ZM389.2 416.1L399.2 426.3L394.6 429.3ZM387.6 420.0L398.5 429.2L394.4 432.6ZM386.4 424.4L398.2 432.3L394.4 436.2ZM385.4 429.0L398.1 435.6L394.7 439.8ZM384.9 434.0L398.2 438.9L395.4 443.6ZM384.7 439.1L398.5 442.4L396.4 447.3ZM384.9 444.5L399.1 445.8L397.6 451.0ZM385.5 450.0L399.7 449.3L398.9 454.6ZM386.5 455.5L400.5 452.8L400.5 458.2ZM387.9 461.2L401.4 456.5L402.2 461.8ZM389.8 466.9L402.4 460.3L404.0 465.4ZM392.1 472.5L403.6 464.1L405.9 469.0ZM394.7 477.8L405.1 468.1L408.0 472.6ZM397.8 482.9L406.9 472.0L410.3 476.2ZM401.2 487.8L409.0 475.8L412.8 479.6ZM404.9 492.3L411.4 479.6L415.6 482.9ZM408.9 496.4L414.2 483.1L418.7 486.0ZM413.3 500.0L417.2 486.3L422.0 488.8ZM417.8 503.2L420.6 489.2L425.6 491.2ZM422.6 505.8L424.2 491.7L429.4 493.3ZM427.6 508.0L428.0 493.7L433.3 494.9ZM432.6 509.5L432.0 495.3L437.4 496.1ZM437.8 510.5L436.1 496.3L441.5 496.7ZM443.0 510.9L440.3 496.9L445.7 496.9ZM448.2 510.7L444.5 496.9L449.9 496.5ZM453.4 509.9L448.6 496.4L454.0 495.6ZM458.4 508.5L452.7 495.5L458.0 494.3ZM463.4 506.6L456.6 494.0L461.8 492.4ZM468.2 504.1L460.4 492.1L465.4 490.1ZM472.7 501.1L464.0 489.9L468.8 487.4ZM477.1 497.7L467.3 487.3L471.8 484.4ZM481.1 493.7L470.4 484.4L474.6 481.1ZM484.8 489.4L473.2 481.3L477.0 477.5ZM488.2 484.8L475.7 478.0L479.1 473.8ZM491.3 479.9L478.0 474.7L480.9 470.1ZM493.9 474.7L480.1 471.3L482.4 466.4ZM496.2 469.3L482.0 467.8L483.6 462.7ZM498.1 463.8L483.8 464.4L484.6 459.1ZM499.5 458.3L485.5 461.0L485.5 455.6ZM500.5 452.9L487.1 457.6L486.3 452.2ZM501.1 447.6L488.4 454.1L486.9 449.0ZM501.3 442.5L489.6 450.6L487.5 445.7ZM501.1 437.5L490.6 447.1L487.8 442.5ZM500.6 432.7L491.3 443.5L487.9 439.3ZM499.6 428.3L491.6 440.0L487.8 436.2ZM498.4 424.1L491.6 436.7L487.5 433.3ZM496.8 420.4L491.4 433.5L486.8 430.6ZM494.9 417.0L490.8 430.7L486.0 428.1ZM492.8 414.2L489.9 428.1L484.9 426.0ZM490.5 411.8L488.8 425.9L483.6 424.3ZM488.0 409.9L487.4 424.2L482.2 422.9ZM485.4 408.6L486.0 422.8L480.6 422.0ZM482.7 407.8L484.4 422.0L479.0 421.6ZM480.0 407.6L482.7 421.6L477.3 421.6ZM477.3 408.0L481.0 421.8L475.6 422.2ZM474.6 409.0L479.4 422.4L474.0 423.2ZM472.0 410.5L477.8 423.5L472.6 424.7ZM469.5 412.5L476.4 425.0L471.2 426.7ZM467.2 415.1L475.1 426.9L470.1 429.0ZM465.1 418.1L474.0 429.2L469.2 431.8ZM463.2 421.7L473.2 431.9L468.6 434.8ZM461.6 425.6L472.5 434.8L468.4 438.2ZM460.4 429.9L472.2 437.9L468.4 441.7ZM459.4 434.6L472.1 441.1L468.7 445.4ZM458.9 439.5L472.2 444.5L469.4 449.1ZM458.7 444.7L472.5 447.9L470.4 452.8ZM458.9 450.0L473.1 451.4L471.6 456.5ZM459.5 455.5L473.7 454.8L472.9 460.2ZM460.5 461.0L474.5 458.3L474.5 463.7ZM461.9 466.8L475.4 462.0L476.2 467.4ZM463.8 472.4L476.4 465.8L478.0 471.0ZM466.1 478.0L477.6 469.7L479.9 474.6ZM468.7 483.4L479.1 473.6L482.0 478.2ZM471.8 488.5L480.9 477.5L484.3 481.7ZM475.2 493.3L483.0 481.4L486.8 485.2ZM478.9 497.8L485.4 485.1L489.6 488.4ZM482.9 501.9L488.2 488.6L492.7 491.5ZM487.3 505.6L491.2 491.9L496.0 494.3ZM491.8 508.7L494.6 494.7L499.6 496.8ZM496.6 511.4L498.2 497.2L503.4 498.8ZM501.6 513.5L502.0 499.3L507.3 500.5ZM506.6 515.1L506.0 500.8L511.4 501.6ZM511.8 516.0L510.1 501.9L515.5 502.3ZM517.0 516.4L514.3 502.4L519.7 502.4ZM522.2 516.2L518.5 502.5L523.9 502.1ZM527.4 515.4L522.6 502.0L528.0 501.2ZM532.4 514.1L526.7 501.0L532.0 499.8ZM537.4 512.1L530.6 499.6L535.8 498.0ZM542.2 509.7L534.4 497.7L539.4 495.7ZM546.7 506.7L538.0 495.4L542.8 493.0ZM551.1 503.2L541.3 492.8L545.8 489.9ZM555.1 499.3L544.4 489.9L548.6 486.6ZM558.8 495.0L547.2 486.8L551.0 483.1ZM562.2 490.3L549.7 483.6L553.1 479.4ZM565.3 485.4L552.0 480.2L554.9 475.6ZM567.9 480.2L554.1 476.8L556.4 471.9ZM570.2 474.9L556.0 473.4L557.6 468.2ZM572.1 469.4L557.8 470.0L558.6 464.6ZM573.5 463.8L559.5 466.5L559.5 461.1ZM574.5 458.5L561.1 463.1L560.3 457.8ZM575.1 453.2L562.4 459.7L560.9 454.5ZM575.3 448.0L563.6 456.2L561.5 451.2ZM575.1 443.0L564.6 452.6L561.8 448.0ZM574.6 438.3L565.3 449.1L561.9 444.8ZM573.6 433.8L565.6 445.6L561.8 441.8ZM572.4 429.7L565.6 442.2L561.5 438.8ZM570.8 425.9L565.4 439.1L560.8 436.1ZM568.9 422.6L564.8 436.2L560.0 433.7ZM566.8 419.7L563.9 433.7L558.9 431.6ZM564.5 417.3L562.8 431.5L557.6 429.8ZM562.0 415.5L561.4 429.7L556.2 428.5ZM559.4 414.2L560.0 428.4L554.6 427.6ZM556.7 413.4L558.4 427.6L553.0 427.1ZM554.0 413.2L556.7 427.2L551.3 427.2Z" fill="#b5151a" stroke="#8e0c10" stroke-width="0.35"/>
<g stroke="#444" stroke-width="0.6" fill="none"><path d="M227 437L270 437M229 437L229 462M235 437L235 458M241 437L241 460M247 437L247 456M253 437L253 459M259 437L259 455M265 437L265 457"/><path d="M270 446L270 497M262 458L270 458M262 470L270 470M262 483L270 483M262 495L270 495"/><path d="M247 386L247 396"/></g>
<g font-family="Liberation Serif" font-size="4.5" fill="#333"><text x="226" y="466">-0.5 -0.5</text><text x="252" y="475">-0.5</text><text x="252" y="487">-0.8</text><text x="256" y="498">-1</text><text x="239" y="397">0.5</text><text x="245" y="387">1</text><text x="251" y="387">y</text><text x="227" y="440">x</text></g><path d="M657.6 435.0L690.6 435.0M657.6 435.0L690.4 439.3M657.6 435.0L690.0 443.5M657.6 435.0L689.2 447.7M657.6 435.0L688.1 451.8M657.6 435.0L686.7 455.6M657.6 435.0L685.0 459.3M657.6 435.0L683.1 462.8M657.6 435.0L680.9 466.0M657.6 435.0L678.5 468.9M657.6 435.0L675.9 471.4M657.6 435.0L673.2 473.6M657.6 435.0L670.2 475.5M657.6 435.0L667.2 476.9M657.6 435.0L664.0 478.0M657.6 435.0L660.8 478.6M657.6 435.0L657.6 478.8M657.6 435.0L654.4 478.6M657.6 435.0L651.2 478.0M657.6 435.0L648.0 476.9M657.6 435.0L645.0 475.5M657.6 435.0L642.0 473.6M657.6 435.0L639.3 471.4M657.6 435.0L636.7 468.9M657.6 435.0L634.3 466.0M657.6 435.0L632.1 462.8M657.6 435.0L630.2 459.3M657.6 435.0L628.5 455.6M657.6 435.0L627.1 451.8M657.6 435.0L626.0 447.7M657.6 435.0L625.2 443.5M657.6 435.0L624.8 439.3M657.6 435.0L624.6 435.0M657.6 435.0L624.8 430.7M657.6 435.0L625.2 426.5M657.6 435.0L626.0 422.3M657.6 435.0L627.1 418.2M657.6 435.0L628.5 414.4M657.6 435.0L630.2 410.7M657.6 435.0L632.1 407.2M657.6 435.0L634.3 404.0M657.6 435.0L636.7 401.1M657.6 435.0L639.3 398.6M657.6 435.0L642.0 396.4M657.6 435.0L645.0 394.5M657.6 435.0L648.0 393.1M657.6 435.0L651.2 392.0M657.6 435.0L654.4 391.4M657.6 435.0L657.6 391.2M657.6 435.0L660.8 391.4M657.6 435.0L664.0 392.0M657.6 435.0L667.2 393.1M657.6 435.0L670.2 394.5M657.6 435.0L673.2 396.4M657.6 435.0L675.9 398.6M657.6 435.0L678.5 401.1M657.6 435.0L680.9 404.0M657.6 435.0L683.1 407.2M657.6 435.0L685.0 410.7M657.6 435.0L686.7 414.4M657.6 435.0L688.1 418.2M657.6 435.0L689.2 422.3M657.6 435.0L690.0 426.5M657.6 435.0L690.4 430.7" stroke="#9b2a2a" stroke-width="0.5" fill="none"/>
<path d="M710.4 435.0L690.6 437.7L690.6 432.3ZM710.1 441.9L690.2 442.0L690.6 436.6ZM709.4 448.7L689.6 446.2L690.4 440.9ZM708.1 455.3L688.6 450.3L689.8 445.1ZM706.4 461.8L687.3 454.3L688.9 449.2ZM704.2 468.0L685.7 458.2L687.7 453.1ZM701.5 473.9L683.8 461.7L686.3 456.9ZM698.4 479.5L681.7 465.1L684.5 460.5ZM694.9 484.6L679.3 468.1L682.6 463.8ZM691.1 489.2L676.7 470.8L680.4 466.9ZM686.9 493.3L673.9 473.2L678.0 469.6ZM682.5 496.8L671.0 475.2L675.4 472.1ZM677.8 499.7L667.9 476.8L672.6 474.2ZM672.9 502.1L664.7 477.9L669.7 475.9ZM667.9 503.7L661.4 478.6L666.6 477.3ZM662.8 504.7L658.2 478.9L663.5 478.2ZM657.6 505.1L654.9 478.8L660.3 478.8ZM652.4 504.7L651.7 478.2L657.0 478.9ZM647.3 503.7L648.6 477.3L653.8 478.6ZM642.3 502.1L645.5 475.9L650.5 477.9ZM637.4 499.7L642.6 474.2L647.3 476.8ZM632.7 496.8L639.8 472.1L644.2 475.2ZM628.3 493.3L637.2 469.6L641.3 473.2ZM624.1 489.2L634.8 466.9L638.5 470.8ZM620.3 484.6L632.6 463.8L635.9 468.1ZM616.8 479.5L630.7 460.5L633.5 465.1ZM613.7 473.9L628.9 456.9L631.4 461.7ZM611.0 468.0L627.5 453.1L629.5 458.2ZM608.8 461.8L626.3 449.2L627.9 454.3ZM607.1 455.3L625.4 445.1L626.6 450.3ZM605.8 448.7L624.8 440.9L625.6 446.2ZM605.1 441.9L624.6 436.6L625.0 442.0ZM604.8 435.0L624.6 432.3L624.6 437.7ZM605.1 428.1L625.0 428.0L624.6 433.4ZM605.8 421.3L625.6 423.8L624.8 429.1ZM607.1 414.7L626.6 419.7L625.4 424.9ZM608.8 408.2L627.9 415.7L626.3 420.8ZM611.0 402.0L629.5 411.8L627.5 416.9ZM613.7 396.1L631.4 408.3L628.9 413.1ZM616.8 390.5L633.5 404.9L630.7 409.5ZM620.3 385.4L635.9 401.9L632.6 406.2ZM624.1 380.8L638.5 399.2L634.8 403.1ZM628.3 376.7L641.3 396.8L637.2 400.4ZM632.7 373.2L644.2 394.8L639.8 397.9ZM637.4 370.3L647.3 393.2L642.6 395.8ZM642.3 367.9L650.5 392.1L645.5 394.1ZM647.3 366.3L653.8 391.4L648.6 392.7ZM652.4 365.3L657.0 391.1L651.7 391.8ZM657.6 364.9L660.3 391.2L654.9 391.2ZM662.8 365.3L663.5 391.8L658.2 391.1ZM667.9 366.3L666.6 392.7L661.4 391.4ZM672.9 367.9L669.7 394.1L664.7 392.1ZM677.8 370.3L672.6 395.8L667.9 393.2ZM682.5 373.2L675.4 397.9L671.0 394.8ZM686.9 376.7L678.0 400.4L673.9 396.8ZM691.1 380.8L680.4 403.1L676.7 399.2ZM694.9 385.4L682.6 406.2L679.3 401.9ZM698.4 390.5L684.5 409.5L681.7 404.9ZM701.5 396.1L686.3 413.1L683.8 408.3ZM704.2 402.0L687.7 416.9L685.7 411.8ZM706.4 408.2L688.9 420.8L687.3 415.7ZM708.1 414.7L689.8 424.9L688.6 419.7ZM709.4 421.3L690.4 429.1L689.6 423.8ZM710.1 428.1L690.6 433.4L690.2 428.0Z" fill="#c01a1f"/>
<ellipse cx="656.6" cy="429.0" rx="6.5" ry="16" fill="#c41c22" fill-opacity="0.85"/>
<ellipse cx="658.6" cy="443.0" rx="6" ry="9" fill="#d0262b" fill-opacity="0.85"/>
<ellipse cx="657.6" cy="435.0" rx="55.0" ry="73.0" fill="none" stroke="#2a2a2a" stroke-width="1.2"/>
<path d="M603 358L603 511L716 511M603.0 510L603.0 507M608.6 510L608.6 507M614.2 510L614.2 507M619.8 510L619.8 507M625.4 510L625.4 507M631.0 510L631.0 507M636.6 510L636.6 507M642.2 510L642.2 507M647.8 510L647.8 507M653.4 510L653.4 507M659.0 510L659.0 507M664.6 510L664.6 507M670.2 510L670.2 507M675.8 510L675.8 507M681.4 510L681.4 507M687.0 510L687.0 507M692.6 510L692.6 507M698.2 510L698.2 507M703.8 510L703.8 507M709.4 510L709.4 507M715.0 510L715.0 507M603 362.0L606 362.0M603 374.3L606 374.3M603 386.6L606 386.6M603 398.9L606 398.9M603 411.2L606 411.2M603 423.5L606 423.5M603 435.8L606 435.8M603 448.1L606 448.1M603 460.4L606 460.4M603 472.7L606 472.7M603 485.0L606 485.0M603 497.3L606 497.3M603 509.6L606 509.6" stroke="#333" stroke-width="0.6" fill="none"/>
<g font-family="Liberation Serif" font-size="4.5" fill="#333"><text x="598" y="518">-0.5</text><text x="656" y="518">0</text><text x="710" y="518">0.5</text><text x="598" y="437">0</text><text x="596" y="364">1</text><text x="605" y="358">y</text><text x="717" y="511">x</text><text x="596" y="512">-1</text></g></svg>
<div class="a" style="left:5px;top:638.5px;width:159.5px;height:20.8px;border-radius:4px;background:rgba(0,0,0,0.5)"></div>
<div style="position:absolute;left:10.0px;top:644.2px;font-family:'Liberation Sans',sans-serif;font-size:11.5px;line-height:1;font-weight:normal;color:#e6e6e6;white-space:nowrap;transform:scaleX(0.8742);transform-origin:0 0;">ESRA PARLAK (Doğrulanmamış)</div>
<div class="a" style="left:0;top:667px;width:1081px;height:3px;background:#181a1b"></div>
<div class="a" style="left:1081px;top:50px;width:3px;height:622px;background:#1a1a1a"></div>
<div class="a" style="left:1084px;top:50px;width:2px;height:622px;background:#292929"></div>
<div class="a" style="left:1086px;top:50px;width:280px;height:622px;background:#1f1f1f"></div>
<div style="position:absolute;left:1103.7px;top:69.6px;font-family:'Liberation Sans',sans-serif;font-size:14px;line-height:1;font-weight:bold;color:#ffffff;white-space:nowrap;transform:scaleX(1.0002);transform-origin:0 0;">Katılımcılar</div>
<div class="a" style="left:1086px;top:100.5px;width:280px;height:1px;background:#333"></div>
<svg class="a" style="left:1086px;top:50px" width="280" height="622" viewBox="1086 50 280 622"><circle cx="1305.2" cy="76" r="1.2" fill="#d8d8d8"/><circle cx="1310.4" cy="76" r="1.2" fill="#d8d8d8"/><circle cx="1315.6" cy="76" r="1.2" fill="#d8d8d8"/><path d="M1334.2 70.4L1345.2 81.4M1345.2 70.4L1334.2 81.4" stroke="#e0e0e0" stroke-width="1.3" stroke-linecap="round"/><rect x="1103" y="116" width="251" height="28" rx="4" fill="#292929"/><circle cx="1334.8" cy="129.4" r="4.4" fill="none" stroke="#d0d0d0" stroke-width="1.2"/><path d="M1338 132.6L1341.6 136.2" stroke="#d0d0d0" stroke-width="1.3" stroke-linecap="round"/><rect x="1103.5" y="153.5" width="250" height="28.5" rx="4" fill="#242424" stroke="#474747" stroke-width="1"/><g fill="none" stroke="#d8d8d8" stroke-width="1.1" stroke-linejoin="round" stroke-linecap="round"><path d="M1189.3 162.6H1185.6Q1183.6 162.6 1183.6 164.6V172.6Q1183.6 174.6 1185.6 174.6H1193.6Q1195.6 174.6 1195.6 172.6V171"/><path d="M1187.4 170.6Q1188 165.4 1193.8 165.2V162.6L1197.8 166.6L1193.8 170.4V167.8Q1190 167.8 1187.4 170.6Z"/></g><path d="M1090.6 201.4H1097.4L1094 205.6Z" fill="#d0d0d0"/><rect x="1215.8" y="193.8" width="124" height="20.6" rx="3" fill="#222" stroke="#4a4a4a" stroke-width="1"/><rect x="1362.3" y="191" width="3" height="351" rx="1.5" fill="#6b6b6b"/><rect x="1086" y="223" width="272.5" height="42" rx="4" fill="#2e2e2e"/><circle cx="1327.6" cy="244.3" r="1.2" fill="#d8d8d8"/><circle cx="1332.8" cy="244.3" r="1.2" fill="#d8d8d8"/><circle cx="1338" cy="244.3" r="1.2" fill="#d8d8d8"/><circle cx="1118" cy="244" r="14.2" fill="#f5d4e2"/><circle cx="1118" cy="287" r="14.2" fill="#f5d9e0"/><g transform="translate(1326,279)" fill="none" stroke="#d6d6d6" stroke-width="1.15" stroke-linecap="round"><path d="M5 6.2V4.3Q5 1.5 7 1.5Q9 1.5 9 4.3V8Q9 9.3 8.3 10"/><path d="M3 7.5Q3 12.2 7 12.2Q8.6 12.2 9.6 11.3M11 7.5Q11 9 10.5 9.8M7 12.2V15"/><path d="M1.8 1.6L12.4 15.2"/></g><circle cx="1118" cy="330" r="14.2" fill="#f2dadf"/><g transform="translate(1326,322)" fill="none" stroke="#d6d6d6" stroke-width="1.15" stroke-linecap="round"><path d="M5 6.2V4.3Q5 1.5 7 1.5Q9 1.5 9 4.3V8Q9 9.3 8.3 10"/><path d="M3 7.5Q3 12.2 7 12.2Q8.6 12.2 9.6 11.3M11 7.5Q11 9 10.5 9.8M7 12.2V15"/><path d="M1.8 1.6L12.4 15.2"/></g><circle cx="1118" cy="373" r="16.4" fill="#14142c" stroke="#6a6ec8" stroke-width="2.2"/><circle cx="1118" cy="373" r="14.2" fill="#fbe8d3"/><g transform="translate(1326,365)"><rect x="4.6" y="1.2" width="4.8" height="9.6" rx="2.4" fill="#f0f0f0"/><path d="M3 7.6Q3 12.4 7 12.4Q11 12.4 11 7.6M7 12.4V15" fill="none" stroke="#f0f0f0" stroke-width="1.3" stroke-linecap="round"/></g><circle cx="1118" cy="416" r="14.2" fill="#dcdcf2"/><g transform="translate(1326,408)" fill="none" stroke="#d6d6d6" stroke-width="1.15" stroke-linecap="round"><path d="M5 6.2V4.3Q5 1.5 7 1.5Q9 1.5 9 4.3V8Q9 9.3 8.3 10"/><path d="M3 7.5Q3 12.2 7 12.2Q8.6 12.2 9.6 11.3M11 7.5Q11 9 10.5 9.8M7 12.2V15"/><path d="M1.8 1.6L12.4 15.2"/></g><circle cx="1118" cy="459" r="14.2" fill="#fbe8d3"/><g transform="translate(1326,451)" fill="none" stroke="#d6d6d6" stroke-width="1.15" stroke-linecap="round"><path d="M5 6.2V4.3Q5 1.5 7 1.5Q9 1.5 9 4.3V8Q9 9.3 8.3 10"/><path d="M3 7.5Q3 12.2 7 12.2Q8.6 12.2 9.6 11.3M11 7.5Q11 9 10.5 9.8M7 12.2V15"/><path d="M1.8 1.6L12.4 15.2"/></g><circle cx="1118" cy="502" r="14.2" fill="#e9dcd8"/><g transform="translate(1326,494)" fill="none" stroke="#d6d6d6" stroke-width="1.15" stroke-linecap="round"><path d="M5 6.2V4.3Q5 1.5 7 1.5Q9 1.5 9 4.3V8Q9 9.3 8.3 10"/><path d="M3 7.5Q3 12.2 7 12.2Q8.6 12.2 9.6 11.3M11 7.5Q11 9 10.5 9.8M7 12.2V15"/><path d="M1.8 1.6L12.4 15.2"/></g><circle cx="1118" cy="545" r="14.2" fill="#fbeabd"/><g transform="translate(1326,537)" fill="none" stroke="#d6d6d6" stroke-width="1.15" stroke-linecap="round"><path d="M5 6.2V4.3Q5 1.5 7 1.5Q9 1.5 9 4.3V8Q9 9.3 8.3 10"/><path d="M3 7.5Q3 12.2 7 12.2Q8.6 12.2 9.6 11.3M11 7.5Q11 9 10.5 9.8M7 12.2V15"/><path d="M1.8 1.6L12.4 15.2"/></g><circle cx="1118" cy="588" r="14.2" fill="#d4e0f2"/><g transform="translate(1326,580)" fill="none" stroke="#d6d6d6" stroke-width="1.15" stroke-linecap="round"><path d="M5 6.2V4.3Q5 1.5 7 1.5Q9 1.5 9 4.3V8Q9 9.3 8.3 10"/><path d="M3 7.5Q3 12.2 7 12.2Q8.6 12.2 9.6 11.3M11 7.5Q11 9 10.5 9.8M7 12.2V15"/><path d="M1.8 1.6L12.4 15.2"/></g><circle cx="1118" cy="631" r="16.4" fill="#14142c" stroke="#6a6ec8" stroke-width="2.2"/><circle cx="1118" cy="631" r="14.2" fill="#d4ebd1"/><g transform="translate(1326,623)"><rect x="4.6" y="1.2" width="4.8" height="9.6" rx="2.4" fill="#f0f0f0"/><path d="M3 7.6Q3 12.4 7 12.4Q11 12.4 11 7.6M7 12.4V15" fill="none" stroke="#f0f0f0" stroke-width="1.3" stroke-linecap="round"/></g><circle cx="1118" cy="674" r="14.2" fill="#dcdcf5"/><g transform="translate(1326,666)" fill="none" stroke="#d6d6d6" stroke-width="1.15" stroke-linecap="round"><path d="M5 6.2V4.3Q5 1.5 7 1.5Q9 1.5 9 4.3V8Q9 9.3 8.3 10"/><path d="M3 7.5Q3 12.2 7 12.2Q8.6 12.2 9.6 11.3M11 7.5Q11 9 10.5 9.8M7 12.2V15"/><path d="M1.8 1.6L12.4 15.2"/></g></svg>
<div style="position:absolute;left:1111.3px;top:238.9px;font-family:'Liberation Sans',sans-serif;font-size:11px;line-height:1;font-weight:bold;color:#8a3a62;white-space:nowrap;transform:scaleX(0.9162);transform-origin:0 0;">RS</div>
<div style="position:absolute;left:1111.3px;top:281.9px;font-family:'Liberation Sans',sans-serif;font-size:11px;line-height:1;font-weight:bold;color:#8a4a5c;white-space:nowrap;transform:scaleX(1.1429);transform-origin:0 0;">34</div>
<div style="position:absolute;left:1111.3px;top:324.9px;font-family:'Liberation Sans',sans-serif;font-size:11px;line-height:1;font-weight:bold;color:#7c3a4a;white-space:nowrap;transform:scaleX(0.8810);transform-origin:0 0;">AN</div>
<div style="position:absolute;left:1111.3px;top:367.9px;font-family:'Liberation Sans',sans-serif;font-size:11px;line-height:1;font-weight:bold;color:#8f5b26;white-space:nowrap;transform:scaleX(0.9532);transform-origin:0 0;">EP</div>
<div style="position:absolute;left:1111.3px;top:410.9px;font-family:'Liberation Sans',sans-serif;font-size:11px;line-height:1;font-weight:bold;color:#4e4f90;white-space:nowrap;transform:scaleX(1.0407);transform-origin:0 0;">FT</div>
<div style="position:absolute;left:1111.3px;top:453.9px;font-family:'Liberation Sans',sans-serif;font-size:11px;line-height:1;font-weight:bold;color:#8f5b26;white-space:nowrap;transform:scaleX(0.8810);transform-origin:0 0;">HD</div>
<div style="position:absolute;left:1111.3px;top:496.9px;font-family:'Liberation Sans',sans-serif;font-size:11px;line-height:1;font-weight:bold;color:#5f4a42;white-space:nowrap;transform:scaleX(0.8810);transform-origin:0 0;">HC</div>
<div style="position:absolute;left:1111.3px;top:539.9px;font-family:'Liberation Sans',sans-serif;font-size:11px;line-height:1;font-weight:bold;color:#8a6a16;white-space:nowrap;transform:scaleX(0.8485);transform-origin:0 0;">ME</div>
<div style="position:absolute;left:1111.3px;top:582.9px;font-family:'Liberation Sans',sans-serif;font-size:11px;line-height:1;font-weight:bold;color:#2c4f7c;white-space:nowrap;transform:scaleX(0.8810);transform-origin:0 0;">ND</div>
<div style="position:absolute;left:1111.3px;top:625.9px;font-family:'Liberation Sans',sans-serif;font-size:11px;line-height:1;font-weight:bold;color:#3c7a3c;white-space:nowrap;transform:scaleX(0.8810);transform-origin:0 0;">RD</div>
<div style="position:absolute;left:1111.3px;top:668.9px;font-family:'Liberation Sans',sans-serif;font-size:11px;line-height:1;font-weight:bold;color:#4e4f90;white-space:nowrap;transform:scaleX(0.9162);transform-origin:0 0;">SA</div>
<div style="position:absolute;left:1115.0px;top:125.6px;font-family:'Liberation Sans',sans-serif;font-size:12.5px;line-height:1;font-weight:normal;color:#8f8f8f;white-space:nowrap;transform:scaleX(0.9663);transform-origin:0 0;">Ad yazın</div>
<div style="position:absolute;left:1202.5px;top:162.2px;font-family:'Liberation Sans',sans-serif;font-size:13px;line-height:1;font-weight:bold;color:#f2f2f2;white-space:nowrap;transform:scaleX(0.9145);transform-origin:0 0;">Daveti paylaş</div>
<div style="position:absolute;left:1103.0px;top:199.3px;font-family:'Liberation Sans',sans-serif;font-size:10.5px;line-height:1;font-weight:normal;color:#d8d8d8;white-space:nowrap;transform:scaleX(1.0182);transform-origin:0 0;">Bu toplantıda (13)</div>
<div style="position:absolute;left:1222.5px;top:199.3px;font-family:'Liberation Sans',sans-serif;font-size:10.5px;line-height:1;font-weight:bold;color:#f2f2f2;white-space:nowrap;transform:scaleX(0.9742);transform-origin:0 0;">Tümünün sesini kapat</div>
<div style="position:absolute;left:1140.0px;top:231.2px;font-family:'Liberation Sans',sans-serif;font-size:13px;line-height:1;font-weight:normal;color:#e8e8e8;white-space:nowrap;transform:scaleX(0.9158);transform-origin:0 0;">RAMAZAN SARI</div>
<div style="position:absolute;left:1140.0px;top:248.5px;font-family:'Liberation Sans',sans-serif;font-size:11px;line-height:1;font-weight:normal;color:#dcdcdc;white-space:nowrap;transform:scaleX(0.9653);transform-origin:0 0;">Düzenleyici</div>
<div style="position:absolute;left:1140.0px;top:280.8px;font-family:'Liberation Sans',sans-serif;font-size:13px;line-height:1;font-weight:normal;color:#e6e6e6;white-space:nowrap;transform:scaleX(0.9362);transform-origin:0 0;">312 074 187 ... (Doğrulanmamış)</div>
<div style="position:absolute;left:1140.0px;top:323.8px;font-family:'Liberation Sans',sans-serif;font-size:13px;line-height:1;font-weight:normal;color:#e6e6e6;white-space:nowrap;transform:scaleX(0.9398);transform-origin:0 0;">A.I. Nistor (Doğrulanmamış)</div>
<div style="position:absolute;left:1140.0px;top:366.8px;font-family:'Liberation Sans',sans-serif;font-size:13px;line-height:1;font-weight:bold;color:#ffffff;white-space:nowrap;transform:scaleX(0.8519);transform-origin:0 0;">ESRA PARL...</div>
<div style="position:absolute;left:1220.0px;top:366.8px;font-family:'Liberation Sans',sans-serif;font-size:13px;line-height:1;font-weight:bold;color:#ffffff;white-space:nowrap;transform:scaleX(0.9223);transform-origin:0 0;">(Doğrulanmamış)</div>
<div style="position:absolute;left:1140.0px;top:409.8px;font-family:'Liberation Sans',sans-serif;font-size:13px;line-height:1;font-weight:normal;color:#e6e6e6;white-space:nowrap;transform:scaleX(0.9334);transform-origin:0 0;">Feride Tuğrul (Doğrulanmamış)</div>
<div style="position:absolute;left:1140.0px;top:452.8px;font-family:'Liberation Sans',sans-serif;font-size:13px;line-height:1;font-weight:normal;color:#e6e6e6;white-space:nowrap;transform:scaleX(0.9093);transform-origin:0 0;">hasan durmaz (Dış)</div>
<div style="position:absolute;left:1140.0px;top:495.8px;font-family:'Liberation Sans',sans-serif;font-size:13px;line-height:1;font-weight:normal;color:#e6e6e6;white-space:nowrap;transform:scaleX(0.9252);transform-origin:0 0;">Hazal Ceyhan (Doğrulanmamış)</div>
<div style="position:absolute;left:1140.0px;top:538.8px;font-family:'Liberation Sans',sans-serif;font-size:13px;line-height:1;font-weight:normal;color:#e6e6e6;white-space:nowrap;transform:scaleX(0.8588);transform-origin:0 0;">MELEK ERDOĞDU (Dış)</div>
<div style="position:absolute;left:1140.0px;top:581.8px;font-family:'Liberation Sans',sans-serif;font-size:13px;line-height:1;font-weight:normal;color:#e6e6e6;white-space:nowrap;transform:scaleX(0.9430);transform-origin:0 0;">Nour El Hou...</div>
<div style="position:absolute;left:1223.0px;top:581.8px;font-family:'Liberation Sans',sans-serif;font-size:13px;line-height:1;font-weight:normal;color:#e6e6e6;white-space:nowrap;transform:scaleX(0.9530);transform-origin:0 0;">(Doğrulanmamış)</div>
<div style="position:absolute;left:1140.0px;top:624.8px;font-family:'Liberation Sans',sans-serif;font-size:13px;line-height:1;font-weight:bold;color:#ffffff;white-space:nowrap;transform:scaleX(0.8989);transform-origin:0 0;">Ryszard De...</div>
<div style="position:absolute;left:1219.7px;top:624.8px;font-family:'Liberation Sans',sans-serif;font-size:13px;line-height:1;font-weight:bold;color:#ffffff;white-space:nowrap;transform:scaleX(0.9260);transform-origin:0 0;">(Doğrulanmamış)</div>
<div style="position:absolute;left:1140.0px;top:667.8px;font-family:'Liberation Sans',sans-serif;font-size:13px;line-height:1;font-weight:normal;color:#e6e6e6;white-space:nowrap;transform:scaleX(0.7938);transform-origin:0 0;">Sabiha ÖZTÜRK (Doğrulanmamış)</div>
<div class="a" style="left:0;top:670px;width:1366px;height:2px;background:#1b2a2e"></div>
<div class="a" style="left:36px;top:670.5px;width:1050px;height:1.5px;background:#34464a"></div>
</body></html>
